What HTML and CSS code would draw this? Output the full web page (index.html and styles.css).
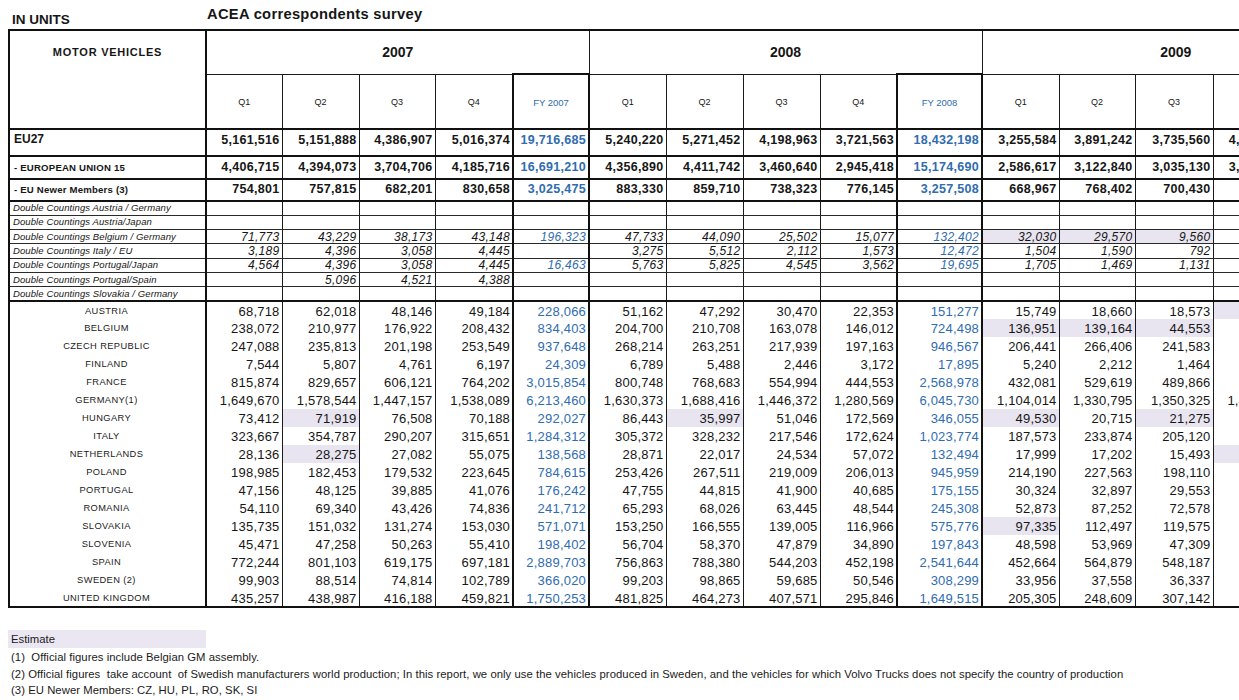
FILE: index.html
```html
<!DOCTYPE html>
<html lang="en">
<head>
<meta charset="utf-8">
<title>ACEA correspondents survey</title>
<link rel="stylesheet" href="styles.css">
</head>
<body>
<div class="page">
  <div class="top">
    <div class="units">IN UNITS</div>
    <div class="survey">ACEA correspondents survey</div>
  </div>
  <table class="sheet">
    <colgroup>
      <col class="c-lab">
      <col class="c76"><col class="c77"><col class="c76"><col class="c78"><col class="c76">
      <col class="c77"><col class="c77"><col class="c77"><col class="c77"><col class="c85">
      <col class="c77"><col class="c76"><col class="c78"><col class="c77"><col class="c80">
    </colgroup>
    <thead>
      <tr class="h1">
        <th class="lab mv" rowspan="2">MOTOR VEHICLES</th>
        <th class="yr" colspan="5">2007</th>
        <th class="yr" colspan="5">2008</th>
        <th class="yr" colspan="5">2009</th>
      </tr>
      <tr class="h2">
        <th>Q1</th><th>Q2</th><th>Q3</th><th>Q4</th><th class="fy">FY 2007</th>
        <th>Q1</th><th>Q2</th><th>Q3</th><th>Q4</th><th class="fy">FY 2008</th>
        <th>Q1</th><th>Q2</th><th>Q3</th><th>Q4</th><th class="fy">FY 2009</th>
      </tr>
    </thead>
    <tbody>
      <tr class="agg eu27">
        <td class="lab">EU27</td>
        <td>5,161,516</td><td>5,151,888</td><td>4,386,907</td><td>5,016,374</td><td class="fy">19,716,685</td>
        <td>5,240,220</td><td>5,271,452</td><td>4,198,963</td><td>3,721,563</td><td class="fy">18,432,198</td>
        <td>3,255,584</td><td>3,891,242</td><td>3,735,560</td><td>4,216,870</td><td class="fy"></td>
      </tr>
      <tr class="agg eu15">
        <td class="lab">- EUROPEAN UNION 15</td>
        <td>4,406,715</td><td>4,394,073</td><td>3,704,706</td><td>4,185,716</td><td class="fy">16,691,210</td>
        <td>4,356,890</td><td>4,411,742</td><td>3,460,640</td><td>2,945,418</td><td class="fy">15,174,690</td>
        <td>2,586,617</td><td>3,122,840</td><td>3,035,130</td><td>3,471,310</td><td class="fy"></td>
      </tr>
      <tr class="agg newer">
        <td class="lab">- EU Newer Members (3)</td>
        <td>754,801</td><td>757,815</td><td>682,201</td><td>830,658</td><td class="fy">3,025,475</td>
        <td>883,330</td><td>859,710</td><td>738,323</td><td>776,145</td><td class="fy">3,257,508</td>
        <td>668,967</td><td>768,402</td><td>700,430</td><td>745,560</td><td class="fy"></td>
      </tr>
      <tr class="dc">
        <td class="lab">Double Countings Austria / Germany</td>
        <td></td><td></td><td></td><td></td><td class="fy"></td>
        <td></td><td></td><td></td><td></td><td class="fy"></td>
        <td></td><td></td><td></td><td></td><td class="fy"></td>
      </tr>
      <tr class="dc">
        <td class="lab">Double Countings Austria/Japan</td>
        <td></td><td></td><td></td><td></td><td class="fy"></td>
        <td></td><td></td><td></td><td></td><td class="fy"></td>
        <td></td><td></td><td></td><td></td><td class="fy"></td>
      </tr>
      <tr class="dc">
        <td class="lab">Double Countings Belgium / Germany</td>
        <td>71,773</td><td>43,229</td><td>38,173</td><td>43,148</td><td class="fy">196,323</td>
        <td>47,733</td><td>44,090</td><td>25,502</td><td>15,077</td><td class="fy">132,402</td>
        <td class="hl">32,030</td><td class="hl">29,570</td><td class="hl">9,560</td><td></td><td class="fy"></td>
      </tr>
      <tr class="dc">
        <td class="lab">Double Countings Italy / EU</td>
        <td>3,189</td><td>4,396</td><td>3,058</td><td>4,445</td><td class="fy"></td>
        <td>3,275</td><td>5,512</td><td>2,112</td><td>1,573</td><td class="fy">12,472</td>
        <td>1,504</td><td>1,590</td><td>792</td><td></td><td class="fy"></td>
      </tr>
      <tr class="dc">
        <td class="lab">Double Countings Portugal/Japan</td>
        <td>4,564</td><td>4,396</td><td>3,058</td><td>4,445</td><td class="fy">16,463</td>
        <td>5,763</td><td>5,825</td><td>4,545</td><td>3,562</td><td class="fy">19,695</td>
        <td>1,705</td><td>1,469</td><td>1,131</td><td></td><td class="fy"></td>
      </tr>
      <tr class="dc">
        <td class="lab">Double Countings Portugal/Spain</td>
        <td></td><td>5,096</td><td>4,521</td><td>4,388</td><td class="fy"></td>
        <td></td><td></td><td></td><td></td><td class="fy"></td>
        <td></td><td></td><td></td><td></td><td class="fy"></td>
      </tr>
      <tr class="dc dc-last">
        <td class="lab">Double Countings Slovakia / Germany</td>
        <td></td><td></td><td></td><td></td><td class="fy"></td>
        <td></td><td></td><td></td><td></td><td class="fy"></td>
        <td></td><td></td><td></td><td></td><td class="fy"></td>
      </tr>
      <tr class="ct">
        <td class="lab">AUSTRIA</td>
        <td>68,718</td><td>62,018</td><td>48,146</td><td>49,184</td><td class="fy">228,066</td>
        <td>51,162</td><td>47,292</td><td>30,470</td><td>22,353</td><td class="fy">151,277</td>
        <td>15,749</td><td>18,660</td><td>18,573</td><td class="hl">14,262</td><td class="fy"></td>
      </tr>
      <tr class="ct">
        <td class="lab">BELGIUM</td>
        <td>238,072</td><td>210,977</td><td>176,922</td><td>208,432</td><td class="fy">834,403</td>
        <td>204,700</td><td>210,708</td><td>163,078</td><td>146,012</td><td class="fy">724,498</td>
        <td class="hl">136,951</td><td class="hl">139,164</td><td class="hl">44,553</td><td></td><td class="fy"></td>
      </tr>
      <tr class="ct">
        <td class="lab">CZECH REPUBLIC</td>
        <td>247,088</td><td>235,813</td><td>201,198</td><td>253,549</td><td class="fy">937,648</td>
        <td>268,214</td><td>263,251</td><td>217,939</td><td>197,163</td><td class="fy">946,567</td>
        <td>206,441</td><td>266,406</td><td>241,583</td><td></td><td class="fy"></td>
      </tr>
      <tr class="ct">
        <td class="lab">FINLAND</td>
        <td>7,544</td><td>5,807</td><td>4,761</td><td>6,197</td><td class="fy">24,309</td>
        <td>6,789</td><td>5,488</td><td>2,446</td><td>3,172</td><td class="fy">17,895</td>
        <td>5,240</td><td>2,212</td><td>1,464</td><td></td><td class="fy"></td>
      </tr>
      <tr class="ct">
        <td class="lab">FRANCE</td>
        <td>815,874</td><td>829,657</td><td>606,121</td><td>764,202</td><td class="fy">3,015,854</td>
        <td>800,748</td><td>768,683</td><td>554,994</td><td>444,553</td><td class="fy">2,568,978</td>
        <td>432,081</td><td>529,619</td><td>489,866</td><td></td><td class="fy"></td>
      </tr>
      <tr class="ct">
        <td class="lab">GERMANY(1)</td>
        <td>1,649,670</td><td>1,578,544</td><td>1,447,157</td><td>1,538,089</td><td class="fy">6,213,460</td>
        <td>1,630,373</td><td>1,688,416</td><td>1,446,372</td><td>1,280,569</td><td class="fy">6,045,730</td>
        <td>1,104,014</td><td>1,330,795</td><td>1,350,325</td><td>1,423,890</td><td class="fy"></td>
      </tr>
      <tr class="ct">
        <td class="lab">HUNGARY</td>
        <td>73,412</td><td class="hl">71,919</td><td>76,508</td><td>70,188</td><td class="fy">292,027</td>
        <td>86,443</td><td class="hl">35,997</td><td>51,046</td><td>172,569</td><td class="fy">346,055</td>
        <td class="hl">49,530</td><td>20,715</td><td class="hl">21,275</td><td></td><td class="fy"></td>
      </tr>
      <tr class="ct">
        <td class="lab">ITALY</td>
        <td>323,667</td><td>354,787</td><td>290,207</td><td>315,651</td><td class="fy">1,284,312</td>
        <td>305,372</td><td>328,232</td><td>217,546</td><td>172,624</td><td class="fy">1,023,774</td>
        <td>187,573</td><td>233,874</td><td>205,120</td><td></td><td class="fy"></td>
      </tr>
      <tr class="ct">
        <td class="lab">NETHERLANDS</td>
        <td>28,136</td><td class="hl">28,275</td><td>27,082</td><td>55,075</td><td class="fy">138,568</td>
        <td>28,871</td><td>22,017</td><td>24,534</td><td>57,072</td><td class="fy">132,494</td>
        <td>17,999</td><td>17,202</td><td>15,493</td><td class="hl">16,127</td><td class="fy"></td>
      </tr>
      <tr class="ct">
        <td class="lab">POLAND</td>
        <td>198,985</td><td>182,453</td><td>179,532</td><td>223,645</td><td class="fy">784,615</td>
        <td>253,426</td><td>267,511</td><td>219,009</td><td>206,013</td><td class="fy">945,959</td>
        <td>214,190</td><td>227,563</td><td>198,110</td><td></td><td class="fy"></td>
      </tr>
      <tr class="ct">
        <td class="lab">PORTUGAL</td>
        <td>47,156</td><td>48,125</td><td>39,885</td><td>41,076</td><td class="fy">176,242</td>
        <td>47,755</td><td>44,815</td><td>41,900</td><td>40,685</td><td class="fy">175,155</td>
        <td>30,324</td><td>32,897</td><td>29,553</td><td></td><td class="fy"></td>
      </tr>
      <tr class="ct">
        <td class="lab">ROMANIA</td>
        <td>54,110</td><td>69,340</td><td>43,426</td><td>74,836</td><td class="fy">241,712</td>
        <td>65,293</td><td>68,026</td><td>63,445</td><td>48,544</td><td class="fy">245,308</td>
        <td>52,873</td><td>87,252</td><td>72,578</td><td></td><td class="fy"></td>
      </tr>
      <tr class="ct">
        <td class="lab">SLOVAKIA</td>
        <td>135,735</td><td>151,032</td><td>131,274</td><td>153,030</td><td class="fy">571,071</td>
        <td>153,250</td><td>166,555</td><td>139,005</td><td>116,966</td><td class="fy">575,776</td>
        <td class="hl">97,335</td><td>112,497</td><td>119,575</td><td></td><td class="fy"></td>
      </tr>
      <tr class="ct">
        <td class="lab">SLOVENIA</td>
        <td>45,471</td><td>47,258</td><td>50,263</td><td>55,410</td><td class="fy">198,402</td>
        <td>56,704</td><td>58,370</td><td>47,879</td><td>34,890</td><td class="fy">197,843</td>
        <td>48,598</td><td>53,969</td><td>47,309</td><td></td><td class="fy"></td>
      </tr>
      <tr class="ct">
        <td class="lab">SPAIN</td>
        <td>772,244</td><td>801,103</td><td>619,175</td><td>697,181</td><td class="fy">2,889,703</td>
        <td>756,863</td><td>788,380</td><td>544,203</td><td>452,198</td><td class="fy">2,541,644</td>
        <td>452,664</td><td>564,879</td><td>548,187</td><td></td><td class="fy"></td>
      </tr>
      <tr class="ct">
        <td class="lab">SWEDEN (2)</td>
        <td>99,903</td><td>88,514</td><td>74,814</td><td>102,789</td><td class="fy">366,020</td>
        <td>99,203</td><td>98,865</td><td>59,685</td><td>50,546</td><td class="fy">308,299</td>
        <td>33,956</td><td>37,558</td><td>36,337</td><td></td><td class="fy"></td>
      </tr>
      <tr class="ct">
        <td class="lab">UNITED KINGDOM</td>
        <td>435,257</td><td>438,987</td><td>416,188</td><td>459,821</td><td class="fy">1,750,253</td>
        <td>481,825</td><td>464,273</td><td>407,571</td><td>295,846</td><td class="fy">1,649,515</td>
        <td>205,305</td><td>248,609</td><td>307,142</td><td></td><td class="fy"></td>
      </tr>
    </tbody>
  </table>
  <div class="notes">
    <div class="estimate">Estimate</div>
    <div class="note">(1)&nbsp; Official figures include Belgian GM assembly.</div>
    <div class="note">(2) Official figures&nbsp; take account&nbsp; of Swedish manufacturers world production; In this report, we only use the vehicles produced in Sweden, and the vehicles for which Volvo Trucks does not specify the country of production</div>
    <div class="note">(3) EU Newer Members: CZ, HU, PL, RO, SK, SI</div>
  </div>
</div>
</body>
</html>
```
FILE: styles.css
```css
* { box-sizing: border-box; }
html, body {
  margin: 0;
  padding: 0;
  background: #ffffff;
  overflow: hidden;
}
body {
  font-family: "Liberation Sans", Arial, sans-serif;
  color: #161616;
  width: 1239px;
  height: 700px;
}
.page {
  width: 1239px;
  height: 700px;
  overflow: hidden;
  padding-left: 8px;
}
.top {
  display: flex;
  align-items: flex-end;
  height: 29px;
}
.units {
  width: 199px;
  padding-left: 4px;
  padding-bottom: 2px;
  font-size: 13.5px;
  font-weight: bold;
  line-height: 14px;
}
.survey {
  font-size: 14.7px;
  font-weight: bold;
  line-height: 15px;
  padding-bottom: 7px;
  letter-spacing: 0.3px;
}

.sheet {
  border-collapse: collapse;
  table-layout: fixed;
  width: 1361px;
  border: 2px solid #111;
}
.c-lab { width: 197px; }
.c76 { width: 76px; }
.c77 { width: 77px; }
.c78 { width: 78px; }
.c80 { width: 80px; }
.c85 { width: 85px; }

.sheet th,
.sheet td {
  padding: 0 2px 0 0;
  border-left: 1px solid #1a1a1a;
  border-right: 1px solid #1a1a1a;
  white-space: nowrap;
  overflow: hidden;
  text-align: right;
  font-size: 13px;
  letter-spacing: 0.2px;
  line-height: 13px;
}
.sheet .lab {
  border-right: 2px solid #111;
  text-align: left;
  padding-left: 4px;
}
.sheet .fy {
  border-left: 2px solid #111;
  border-right: 2px solid #111;
  color: #2f6cb0;
}

/* header */
.h1 { height: 44px; }
.h1 th.yr {
  text-align: center;
  font-size: 14px;
  font-weight: bold;
  letter-spacing: 0;
  border-bottom: 1px solid #1a1a1a;
  padding: 0;
}
.sheet th.mv {
  text-align: center;
  vertical-align: top;
  padding: 15px 0 0 0;
  font-size: 11px;
  line-height: 12px;
  font-weight: bold;
  letter-spacing: 0.75px;
  border-bottom: 2px solid #111;
}
.h2 { height: 55px; }
.h2 th {
  text-align: center;
  font-weight: normal;
  font-size: 9px;
  letter-spacing: 0;
  padding: 2px 0 0 0;
  border-bottom: 2px solid #111;
}
.h2 th.fy {
  border-top: 2px solid #111;
  font-size: 9.5px;
}

/* aggregate rows */
.agg td {
  font-weight: bold;
  font-size: 12.5px;
  letter-spacing: 0.3px;
  border-bottom: 2px solid #111;
}
.eu27 { height: 27px; }
.eu27 td { padding-bottom: 4px; }
.eu27 td.lab { font-size: 12px; letter-spacing: 0; padding-bottom: 6px; }
.eu15 { height: 23px; }
.eu15 td { padding-bottom: 1px; }
.newer { height: 22px; }
.newer td { padding-bottom: 1px; }
.eu15 td.lab,
.newer td.lab {
  font-size: 9.6px;
  letter-spacing: 0.2px;
}

/* double countings */
.dc { height: 14.3px; }
.dc td {
  font-style: italic;
  font-size: 12px;
  line-height: 12px;
  border-bottom: 1px solid #2a2a2a;
  letter-spacing: 0.3px;
}
.dc td.lab {
  font-size: 9.5px;
  letter-spacing: 0.1px;
  padding-left: 3px;
}
.dc-last td { border-bottom: 2px solid #111; }

/* country rows */
.ct { height: 18px; }
.ct td { padding-top: 1px; }
.ct td.lab {
  text-align: center;
  font-size: 9.3px;
  letter-spacing: 0.4px;
  padding-left: 0;
  color: #1a1a1a;
}

.sheet td.hl { background: #e9e5f0; }

/* footnotes */
.notes {
  margin-top: 22px;
  font-size: 11.3px;
  line-height: 16.5px;
  color: #1a1a1a;
}
.estimate {
  width: 198px;
  height: 18px;
  background: #ebe7f2;
  padding-left: 3px;
  line-height: 19px;
  margin-bottom: 1px;
}
.note {
  padding-left: 3px;
  letter-spacing: 0.05px;
}
```
